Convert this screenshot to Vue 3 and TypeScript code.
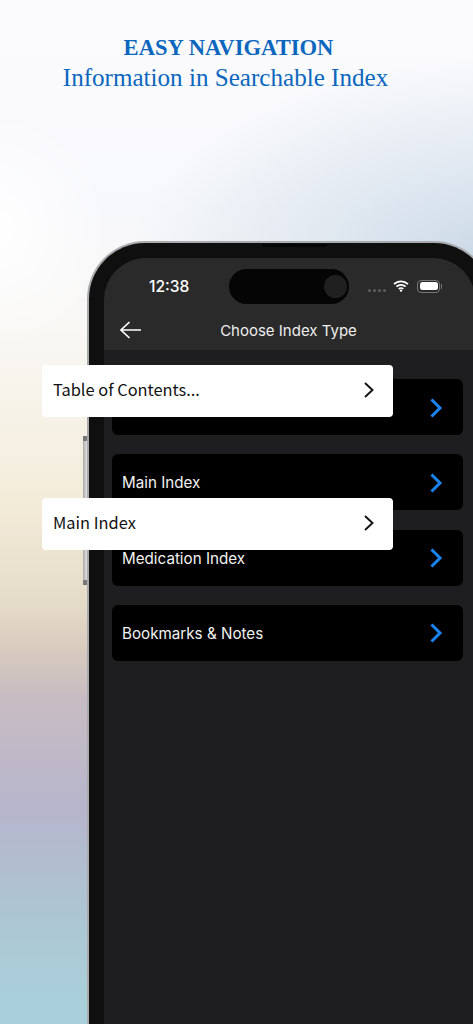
<script setup lang="ts">
const rows: string[] = ['', 'Main Index', 'Medication Index', 'Bookmarks & Notes']
const callouts: { label: string; cls: string }[] = [
  { label: 'Table of Contents...', cls: 'first' },
  { label: 'Main Index', cls: 'second' },
]
</script>

<template>
  <main class="page">
    <header class="heading">
      <h1>EASY NAVIGATION</h1>
      <p>Information in Searchable Index</p>
    </header>

    <section class="phone">
      <span class="speaker"></span>
      <span class="side-button upper"></span>
      <span class="side-button lower"></span>
      <div class="screen">
        <div class="topbar">
          <div class="status">
            <span class="time">12:38</span>
            <div class="island"><span class="camera"></span></div>
            <div class="indicators">
              <span class="dots"><i></i><i></i><i></i><i></i></span>
              <svg class="wifi" width="16" height="12" viewBox="0 0 16 12">
                <path d="M1 4.2a10 10 0 0 1 14 0M3.4 6.7a6.6 6.6 0 0 1 9.2 0M5.7 9a3.2 3.2 0 0 1 4.6 0" fill="none" stroke="#fff" stroke-width="1.7" />
                <circle cx="8" cy="10.6" r="1.2" fill="#fff" />
              </svg>
              <span class="battery"><b></b></span>
            </div>
          </div>
          <div class="nav">
            <svg class="back" width="24" height="20" viewBox="0 0 24 20">
              <path d="M22 10H2M10.5 2 2 10l8.5 8" fill="none" stroke="#fff" stroke-width="1.7" />
            </svg>
            <span class="title">Choose Index Type</span>
          </div>
        </div>
        <div class="list">
          <div v-for="(row, i) in rows" :key="i" class="row">
            <span>{{ row }}</span>
            <svg width="14" height="22" viewBox="0 0 14 22">
              <path d="M2.5 2.5 11 11l-8.5 8.5" fill="none" stroke="#1a84ee" stroke-width="3" />
            </svg>
          </div>
        </div>
      </div>
    </section>

    <div v-for="c in callouts" :key="c.cls" class="callout" :class="c.cls">
      <span class="label">{{ c.label }}</span>
      <svg width="12" height="18" viewBox="0 0 12 18">
        <path d="M2 2l7.5 7L2 16" fill="none" stroke="#111" stroke-width="1.9" />
      </svg>
    </div>
  </main>
</template>

<style>
html, body { margin: 0; }
</style>

<style scoped>
.page {
  position: relative;
  width: 473px;
  height: 1024px;
  overflow: hidden;
  background:
    radial-gradient(ellipse 400px 230px at 520px 285px, #c2d3e3 0%, rgba(198, 214, 229, 0.55) 45%, rgba(198, 214, 229, 0) 100%),
    radial-gradient(ellipse 120px 120px at -10px 230px, #ffffff 0%, rgba(255, 255, 255, 0) 100%),
    linear-gradient(180deg, #fbfbfd 0%, #f7f8fb 20%, #f9f8f5 32%, #f3ecd9 49%, #e5dbc9 59%, #d9cdbf 63%, #c8bcc2 68%, #b6b5cc 79%, #adc5d3 89%, #a9d0da 98%);
}
.heading {
  padding: 34px 22px 0 0;
  text-align: center;
  color: #0b67be;
  font-family: "Liberation Serif", serif;
}
.heading h1 {
  margin: 0 0 0 6px;
  font-size: 22.6px;
  line-height: 27px;
  font-weight: 700;
}
.heading p {
  margin: 1px 0 0;
  font-size: 25.1px;
  line-height: 31px;
}
.phone {
  position: relative;
  box-sizing: border-box;
  margin: 148px 0 0 87px;
  width: 405px;
  height: 900px;
  padding: 15px 15px 0;
  border-radius: 58px 58px 0 0;
  background: #0f0f10;
  border: 2px solid #a9abae;
  border-bottom: 0;
}
.speaker {
  position: absolute;
  top: 1px;
  left: 173px;
  width: 65px;
  height: 3px;
  border-radius: 0 0 3px 3px;
  background: #050505;
}
.side-button {
  position: absolute;
  left: -6px;
  width: 4px;
  border-top: 5px solid #777;
  border-bottom: 5px solid #777;
  background: linear-gradient(90deg, #a8a8a8, #e2e2e2);
}
.side-button.upper { top: 193px; height: 60px; }
.side-button.lower { top: 272px; height: 60px; }
.screen {
  height: 100%;
  border-radius: 42px 42px 0 0;
  overflow: hidden;
  background: #1e1e20;
  font-family: Inter, sans-serif;
  color: #fff;
}
.topbar {
  height: 92px;
  background: #2a2a2a;
}
.status {
  position: relative;
  height: 53px;
}
.time {
  position: absolute;
  top: 19px;
  left: 45px;
  font-size: 15.6px;
  line-height: 20px;
  font-weight: 500;
}
.island {
  position: absolute;
  top: 11px;
  left: 125px;
  width: 120px;
  height: 35px;
  border-radius: 18px;
  background: #050505;
}
.camera {
  position: absolute;
  right: 2px;
  top: 6px;
  width: 23px;
  height: 23px;
  border-radius: 50%;
  background: #202020;
}
.indicators {
  position: absolute;
  top: 20px;
  left: 264px;
  display: flex;
  align-items: center;
  height: 16px;
}
.dots {
  display: flex;
  gap: 2px;
  margin-top: 9px;
  margin-right: 7px;
}
.dots i {
  width: 3px;
  height: 3px;
  border-radius: 50%;
  background: #5e5e5e;
}
.wifi { margin-right: 8px; }
.battery {
  position: relative;
  box-sizing: border-box;
  width: 23px;
  height: 13px;
  padding: 1.5px;
  border: 1px solid #777;
  border-radius: 4px;
}
.battery b {
  display: block;
  height: 100%;
  border-radius: 2.5px;
  background: #fff;
}
.battery::after {
  content: "";
  position: absolute;
  right: -3px;
  top: 3px;
  width: 1.5px;
  height: 5px;
  background: #777;
}
.nav {
  position: relative;
  height: 39px;
  display: flex;
  align-items: center;
  justify-content: center;
}
.back {
  position: absolute;
  left: 15px;
  top: 9px;
}
.title {
  margin-right: 2px;
  font-size: 15px;
  color: #eee;
}
.list {
  display: flex;
  flex-direction: column;
  gap: 19.3px;
  padding: 29px 12px 0 8px;
}
.row {
  height: 56px;
  box-sizing: border-box;
  display: flex;
  align-items: center;
  justify-content: space-between;
  padding: 1px 20px 0 10px;
  border-radius: 6px;
  background: #000;
  font-size: 15.2px;
  color: #f2f2f2;
}
.callout {
  position: absolute;
  left: 42px;
  width: 351px;
  height: 52px;
  box-sizing: border-box;
  display: flex;
  align-items: center;
  justify-content: space-between;
  padding: 0 18px 3px 11px;
  border-radius: 4px;
  background: #fff;
  font-family: "Noto Sans CJK SC", "Noto Sans", sans-serif;
  font-size: 16.4px;
  color: #111;
}
.label { margin-bottom: 2px; }
.callout.first { top: 365px; }
.callout.second { top: 498px; }
</style>
